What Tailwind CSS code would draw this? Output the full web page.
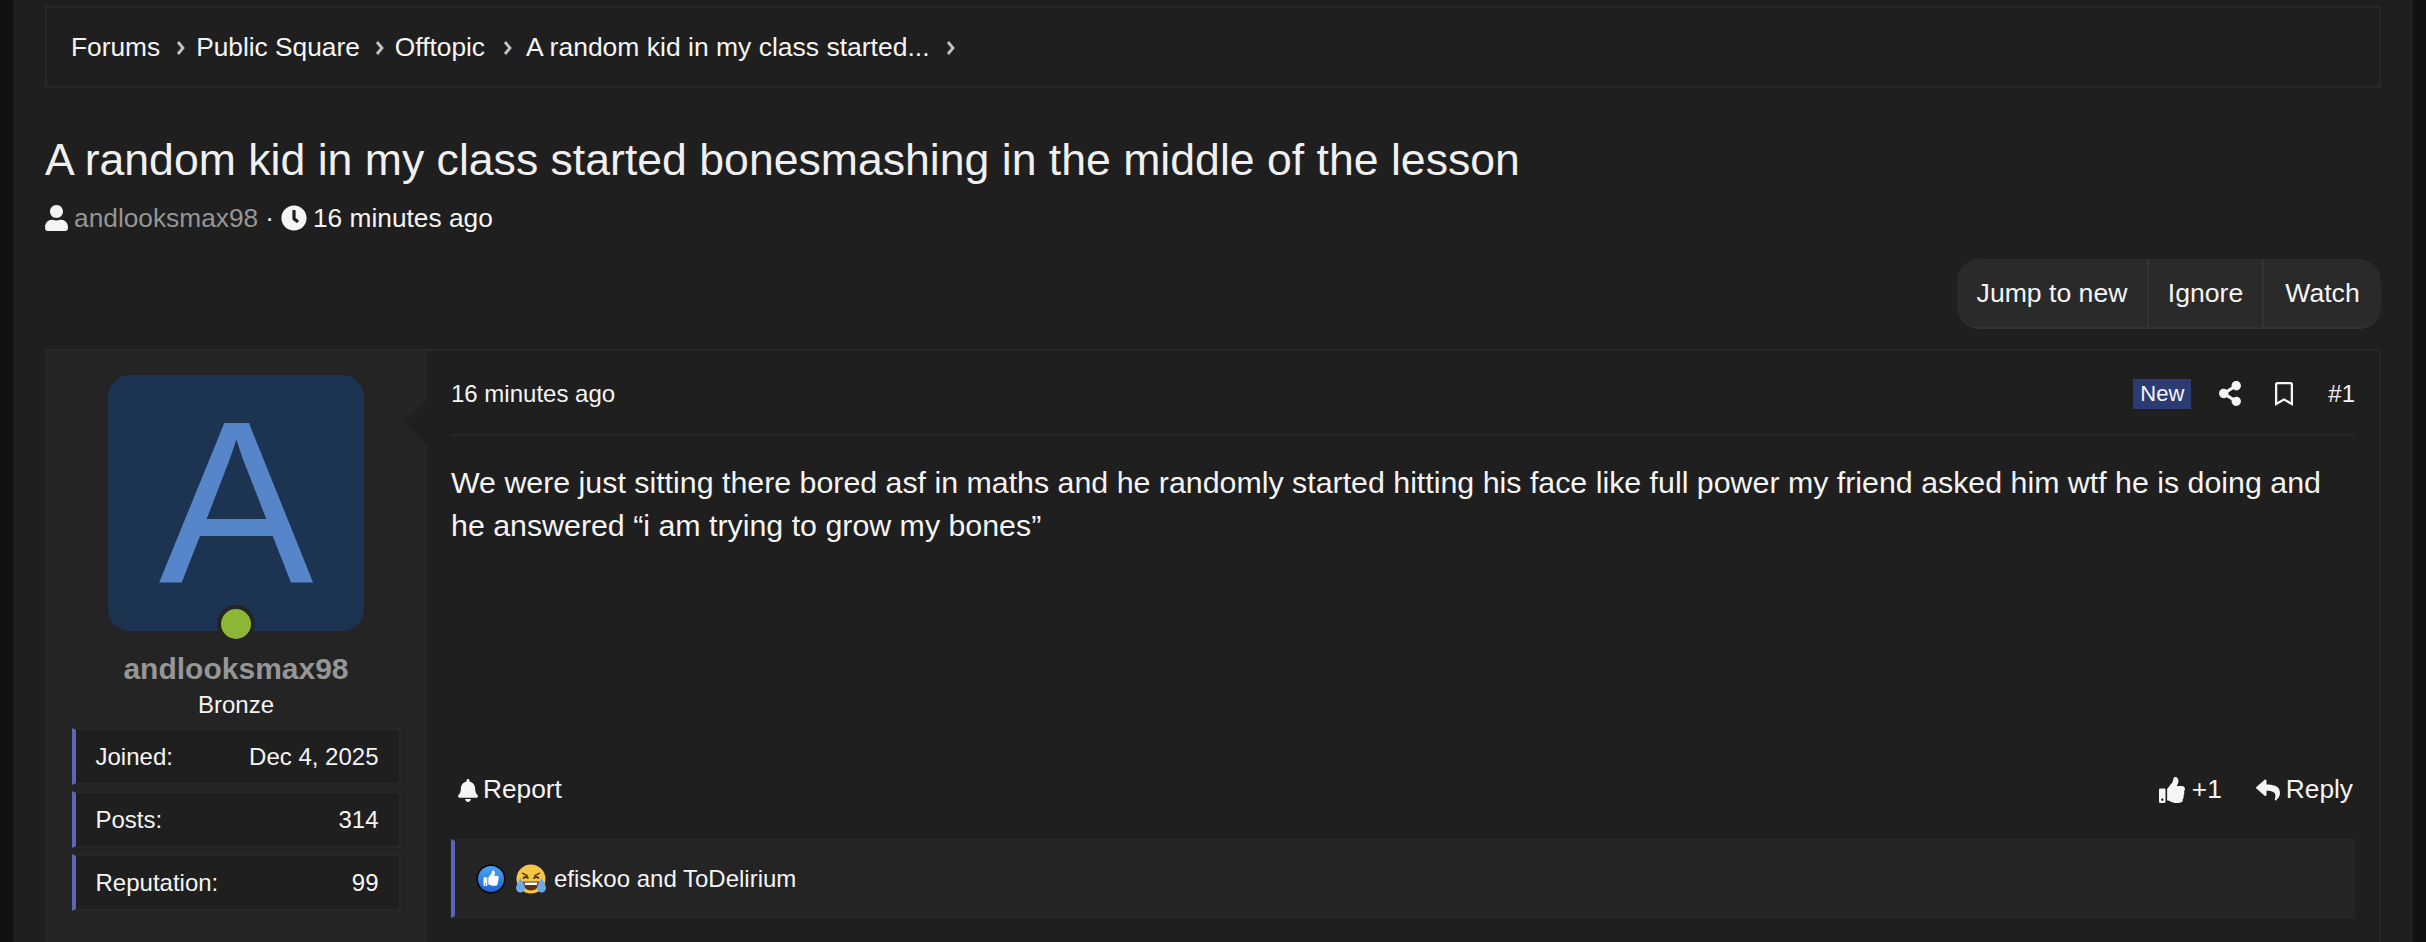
<!DOCTYPE html>
<html lang="en">
<head>
    <meta charset="UTF-8">
    <title>A random kid in my class started bonesmashing in the middle of the lesson</title>
    <script src="https://cdn.jsdelivr.net/npm/@tailwindcss/browser@4"></script>
</head>
<body class="bg-[#111111] font-['Liberation_Sans',sans-serif] text-[#f5f5f5]">
    <div class="h-[942px] overflow-hidden mx-[13px] bg-[#1f1f1f] px-[32px] pt-[6px]">
        <!-- breadcrumb -->
        <nav class="h-[82px] border-2 border-[#272727] flex items-center pl-[24px] pt-[2px] text-[26.3px]">
            <span>Forums</span>
            <svg class="w-[11px] h-[16px] ml-[15px] mr-[10px] text-[#c4c4c4]" viewBox="0 0 11 16" fill="none" stroke="currentColor" stroke-width="2.8"><path d="M3 2l5 6-5 6"/></svg>
            <span>Public Square</span>
            <svg class="w-[11px] h-[16px] ml-[14px] mr-[10px] text-[#c4c4c4]" viewBox="0 0 11 16" fill="none" stroke="currentColor" stroke-width="2.8"><path d="M3 2l5 6-5 6"/></svg>
            <span>Offtopic</span>
            <svg class="w-[11px] h-[16px] ml-[17px] mr-[13px] text-[#c4c4c4]" viewBox="0 0 11 16" fill="none" stroke="currentColor" stroke-width="2.8"><path d="M3 2l5 6-5 6"/></svg>
            <span class="text-[26.5px]">A random kid in my class started...</span>
            <svg class="w-[11px] h-[16px] ml-[15px] text-[#c4c4c4]" viewBox="0 0 11 16" fill="none" stroke="currentColor" stroke-width="2.8"><path d="M3 2l5 6-5 6"/></svg>
        </nav>

        <!-- thread title -->
        <h1 class="mt-[47px] text-[44.6px] leading-[50px] text-[#f0f0f0]">A random kid in my class started bonesmashing in the middle of the lesson</h1>
        <div class="mt-[15px] flex items-center text-[26.3px] leading-[36px]">
            <svg class="w-[23px] h-[26px] mr-[6px]" viewBox="0 0 448 512" fill="currentColor"><path d="M224 256c70.7 0 128-57.3 128-128S294.7 0 224 0 96 57.3 96 128s57.3 128 128 128zm89.6 32h-16.7c-22.2 10.2-46.9 16-72.9 16s-50.6-5.8-72.9-16h-16.7C60.2 288 0 348.2 0 422.4V464c0 26.5 21.5 48 48 48h352c26.500 0 48-21.5 48-48v-41.6c0-74.2-60.2-134.4-134.4-134.4z"/></svg>
            <span class="text-[#969696]">andlooksmax98</span>
            <span class="mx-[7px]">·</span>
            <svg class="w-[26px] h-[26px] mr-[6px]" viewBox="0 0 512 512" fill="currentColor"><path d="M256,8C119,8,8,119,8,256S119,504,256,504,504,393,504,256,393,8,256,8Zm92.49,313h0l-20,25a16,16,0,0,1-22.49,2.5h0l-67-49.72a40,40,0,0,1-15-31.23V112a16,16,0,0,1,16-16h32a16,16,0,0,1,16,16V256l58,42.5A16,16,0,0,1,348.49,321Z"/></svg>
            <span>16 minutes ago</span>
        </div>

        <!-- thread actions -->
        <div class="mt-[23px] flex justify-end">
            <div class="h-[70px] flex items-center bg-[#2a2a2a] border-b-2 border-[#333333] rounded-[22px] text-[26.6px]">
                <span class="h-full flex items-center w-[192px] justify-center pt-[2px] border-r-2 border-[#333333]">Jump to new</span>
                <span class="h-full flex items-center w-[115px] justify-center pt-[2px] border-r-2 border-[#333333]">Ignore</span>
                <span class="h-full flex items-center w-[117px] justify-center pt-[2px]">Watch</span>
            </div>
        </div>

        <!-- post -->
        <article class="mt-[20px] flex border-2 border-[#272727] h-[700px]">
            <aside class="w-[380px] shrink-0 bg-[#242424] border-r-2 border-[#272727] flex flex-col items-center pt-[24px]">
                <div class="relative w-[256px] h-[256px] rounded-[22px] bg-[#1d3352] flex items-center justify-center text-[232px] leading-none text-[#5686c9]">
                    A
                    <span class="absolute left-[109px] top-[230px] w-[38px] h-[38px] rounded-full bg-[#8db536] border-[4px] border-[#242424]"></span>
                </div>
                <div class="mt-[20px] text-[30px] leading-[36px] font-bold text-[#969696]">andlooksmax98</div>
                <div class="mt-[3px] text-[24px] leading-[30px]">Bronze</div>
                <dl class="mt-[8px] w-[329px] flex flex-col gap-[6px] text-[24px]">
                    <div class="h-[57px] flex items-center justify-between pl-[20px] pr-[20px] bg-[#1f1f1f] border-2 border-[#272727] border-l-[4px] border-l-[#5b66b8]">
                        <dt>Joined:</dt><dd>Dec 4, 2025</dd>
                    </div>
                    <div class="h-[57px] flex items-center justify-between pl-[20px] pr-[20px] bg-[#1f1f1f] border-2 border-[#272727] border-l-[4px] border-l-[#5b66b8]">
                        <dt>Posts:</dt><dd>314</dd>
                    </div>
                    <div class="h-[57px] flex items-center justify-between pl-[20px] pr-[20px] bg-[#1f1f1f] border-2 border-[#272727] border-l-[4px] border-l-[#5b66b8]">
                        <dt>Reputation:</dt><dd>99</dd>
                    </div>
                </dl>
            </aside>

            <div class="relative flex-1 flex flex-col px-[24px]">
                <!-- arrow toward the avatar -->
                <span class="absolute left-[-23px] top-[49px] w-0 h-0 border-y-[23px] border-y-transparent border-r-[23px] border-r-[#1f1f1f]"></span>

                <header class="h-[85px] flex items-center justify-between pt-[2px] border-b-2 border-[#272727] text-[24px]">
                    <span>16 minutes ago</span>
                    <div class="flex items-center">
                        <span class="h-[30px] px-[7px] flex items-center bg-[#2d3b73] text-[22px]">New</span>
                        <svg class="w-[22px] h-[25px] ml-[28px]" viewBox="0 0 448 512" fill="currentColor"><path d="M352 320c-22.608 0-43.387 7.819-59.79 20.895l-102.486-64.054a96.551 96.551 0 0 0 0-41.683l102.486-64.054C308.613 184.181 329.392 192 352 192c53.019 0 96-42.981 96-96S405.019 0 352 0s-96 42.981-96 96c0 7.158.79 14.13 2.276 20.841L155.79 180.895C139.387 167.819 118.608 160 96 160c-53.019 0-96 42.981-96 96s42.981 96 96 96c22.608 0 43.387-7.819 59.79-20.895l102.486 64.054A96.301 96.301 0 0 0 256 416c0 53.019 42.981 96 96 96s96-42.981 96-96-42.981-96-96-96z"/></svg>
                        <svg class="w-[18px] h-[24px] ml-[34px]" viewBox="0 0 384 512" fill="currentColor"><path d="M336 0H48C21.49 0 0 21.49 0 48v464l192-112 192 112V48c0-26.51-21.49-48-48-48zm0 428.43l-144-84-144 84V54a6 6 0 0 1 6-6h276c3.314 0 6 2.683 6 5.996V428.43z"/></svg>
                        <span class="ml-[35px]">#1</span>
                    </div>
                </header>

                <p class="mt-[25px] h-[294px] pr-[24px] text-[30.35px] leading-[43px]">We were just sitting there bored asf in maths and he randomly started hitting his face like full power my friend asked him wtf he is doing and he answered “i am trying to grow my bones”</p>

                <footer class="h-[70px] flex items-center justify-between text-[26.3px]">
                    <div class="flex items-center pl-[7px]">
                        <svg class="w-[20px] h-[23px] mr-[5px]" viewBox="0 0 448 512" fill="currentColor"><path d="M224 512c35.32 0 63.97-28.65 63.97-64H160.03c0 35.35 28.65 64 63.97 64zm215.39-149.71c-19.32-20.76-55.47-51.99-55.47-154.29 0-77.7-54.48-139.9-127.94-155.16V32c0-17.67-14.32-32-31.98-32s-31.98 14.33-31.98 32v20.84C118.56 68.1 64.08 130.3 64.08 208c0 102.3-36.15 133.53-55.47 154.29-6 6.45-8.66 14.16-8.61 21.71.11 16.4 12.98 32 32.1 32h383.8c19.12 0 32-15.6 32.1-32 .05-7.55-2.61-15.27-8.61-21.71z"/></svg>
                        <span>Report</span>
                    </div>
                    <div class="flex items-center pr-[2px]">
                        <svg class="w-[26px] h-[26px] mr-[7px]" viewBox="0 0 512 512" fill="currentColor"><path d="M104 224H24c-13.255 0-24 10.745-24 24v240c0 13.255 10.745 24 24 24h80c13.255 0 24-10.745 24-24V248c0-13.255-10.745-24-24-24zM64 472c-13.255 0-24-10.745-24-24s10.745-24 24-24 24 10.745 24 24-10.745 24-24 24zM384 81.452c0 42.416-25.97 66.208-33.277 94.548h101.723c33.397 0 59.397 27.746 59.553 58.098.084 17.938-7.546 37.249-19.439 49.197l-.11.11c9.836 23.337 8.237 56.037-9.308 79.469 8.681 25.895-.069 57.704-16.382 74.757 4.298 17.598 2.244 32.575-6.148 44.632C440.202 511.587 389.616 512 346.839 512l-2.845-.001c-48.287-.017-87.806-17.598-119.56-31.725-15.957-7.099-36.821-15.887-52.651-16.178-6.54-.12-11.783-5.457-11.783-11.998v-213.77c0-3.2 1.282-6.271 3.558-8.521 39.614-39.144 56.648-80.587 89.117-113.111 14.804-14.832 20.188-37.236 25.393-58.902C282.515 39.293 291.817 0 312 0c24 0 72 8 72 81.452z"/></svg>
                        <span>+1</span>
                        <svg class="w-[24px] h-[24px] ml-[34px] mr-[6px]" viewBox="0 0 512 512" fill="currentColor"><path d="M8.309 189.836L184.313 37.851C199.719 24.546 224 35.347 224 56.015v80.053c160.629 1.839 288 34.032 288 186.258 0 61.441-39.581 122.309-83.333 154.132-13.653 9.931-33.111-2.533-28.077-18.631 45.344-145.012-21.507-183.51-176.59-185.742V360c0 20.7-24.3 31.453-39.687 18.164l-176.004-152c-11.071-9.562-11.086-26.753 0-36.328z"/></svg>
                        <span>Reply</span>
                    </div>
                </footer>

                <!-- reactions -->
                <div class="mt-[14px] h-[79px] flex items-center pl-[21px] bg-[#242424] border-2 border-[#272727] border-l-[4px] border-l-[#5b66b8] text-[24px]">
                    <svg class="w-[30px] h-[30px]" viewBox="0 0 30 30">
                        <defs><linearGradient id="likeBlue" x1="0" y1="0" x2="0" y2="1"><stop offset="0" stop-color="#4aa6f5"/><stop offset="1" stop-color="#1c62d0"/></linearGradient></defs>
                        <circle cx="15" cy="15" r="14.5" fill="#050505"/>
                        <circle cx="15" cy="15" r="13" fill="url(#likeBlue)"/>
                        <g transform="translate(7.5 6.5) scale(0.03)" fill="#ffffff"><path d="M104 224H24c-13.255 0-24 10.745-24 24v240c0 13.255 10.745 24 24 24h80c13.255 0 24-10.745 24-24V248c0-13.255-10.745-24-24-24zM64 472c-13.255 0-24-10.745-24-24s10.745-24 24-24 24 10.745 24 24-10.745 24-24 24zM384 81.452c0 42.416-25.97 66.208-33.277 94.548h101.723c33.397 0 59.397 27.746 59.553 58.098.084 17.938-7.546 37.249-19.439 49.197l-.11.11c9.836 23.337 8.237 56.037-9.308 79.469 8.681 25.895-.069 57.704-16.382 74.757 4.298 17.598 2.244 32.575-6.148 44.632C440.202 511.587 389.616 512 346.839 512l-2.845-.001c-48.287-.017-87.806-17.598-119.56-31.725-15.957-7.099-36.821-15.887-52.651-16.178-6.54-.12-11.783-5.457-11.783-11.998v-213.77c0-3.2 1.282-6.271 3.558-8.521 39.614-39.144 56.648-80.587 89.117-113.111 14.804-14.832 20.188-37.236 25.393-58.902C282.515 39.293 291.817 0 312 0c24 0 72 8 72 81.452z"/></g>
                    </svg>
                    <svg class="w-[30px] h-[30px] ml-[10px]" viewBox="0 0 30 30">
                        <circle cx="15" cy="15" r="14.5" fill="#f6c548"/>
                        <path d="M6 9l6 3M24 9l-6 3" stroke="#6b4a1a" stroke-width="1.6" fill="none"/>
                        <path d="M7 14.5q3-3 5.5 0M17.500 14.5q3-3 5.5 0" stroke="#4a3312" stroke-width="1.8" fill="none"/>
                        <path d="M7 17.5h16c0 6-3.5 9-8 9s-8-3-8-9z" fill="#5c3510"/>
                        <path d="M8.5 18.5h13l-.6 2.4h-11.800z" fill="#ffffff"/>
                        <path d="M4.500 14c-2 4-4.500 7-4.500 10a4.500 4.500 0 0 0 9 0c0-3-2.500-6-4.500-10zM25.500 14c-2 4-4.500 7-4.500 10a4.500 4.500 0 0 0 9 0c0-3-2.500-6-4.500-10z" fill="#6fa8e8"/>
                    </svg>
                    <span class="ml-[8px]">efiskoo and ToDelirium</span>
                </div>
            </div>
        </article>
    </div>
</body>
</html>
